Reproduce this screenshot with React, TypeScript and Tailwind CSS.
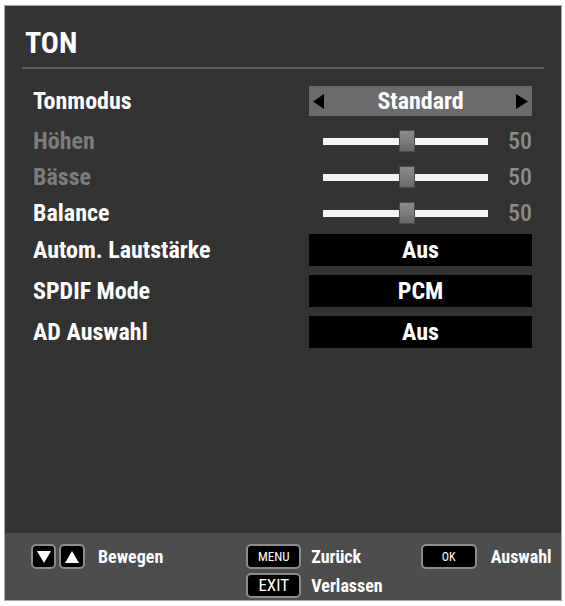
import React from 'react'

function Slider({ value }: { value: number }) {
  return (
    <div className="flex items-center w-[223px]">
      <div className="relative ml-[14px] w-[165px] h-[7px] bg-[#f4f4f4]">
        <div className="absolute left-[76px] top-[-8px] w-[16px] h-[22px] bg-gradient-to-b from-[#8c8c8c] to-[#6a6a6a] border border-[#4a4a4a]" />
      </div>
      <span className="ml-auto text-[24px] font-medium text-[#8a8a8a] leading-none">{value}</span>
    </div>
  )
}

function Row({ label, dim, className, children }: { label: string; dim?: boolean; className?: string; children: React.ReactNode }) {
  return (
    <div className={`flex items-center ${className ?? ''}`}>
      <span className={`w-[304px] shrink-0 pl-[28px] text-[24px] font-bold leading-none ${dim ? 'text-[#7c7c7c]' : 'text-white'}`}>{label}</span>
      {children}
    </div>
  )
}

function ValueBox({ text }: { text: string }) {
  return (
    <div className="w-[223px] h-full bg-black flex items-center justify-center text-[24px] font-bold text-white leading-none">
      {text}
    </div>
  )
}

function Key({ children, className }: { children: React.ReactNode; className?: string }) {
  return (
    <div className={`bg-black border-2 border-[#8c8c8c] rounded-[5px] flex items-center justify-center text-white ${className ?? ''}`}>
      {children}
    </div>
  )
}

export default function App() {
  return (
    <div className="w-[565px] h-[606px] bg-white pt-[5px] pl-[4px] font-['Roboto_Condensed',sans-serif]">
      <div className="w-[558px] h-[596px] bg-[#333333] border border-[#a8a8a8] flex flex-col">
        {/* Kopf */}
        <div className="pl-[20px] pt-[22px] h-[61px]">
          <h1 className="text-[30px] font-bold text-white leading-none">TON</h1>
        </div>
        <div className="mx-[17px] h-[2px] bg-[#5e5e5e]" />

        {/* Einstellungen */}
        <Row label="Tonmodus" className="mt-[17px] h-[30px]">
          <div className="w-[223px] h-full bg-[#6b6b6b] flex items-center px-[4px]">
            <svg width="12" height="15" viewBox="0 0 12 15"><polygon points="11,0 11,15 0,7.5" fill="#000" /></svg>
            <span className="flex-1 text-center text-[24px] font-bold text-white leading-none">Standard</span>
            <svg width="12" height="15" viewBox="0 0 12 15"><polygon points="0,0 0,15 12,7.5" fill="#000" /></svg>
          </div>
        </Row>
        <Row label="Höhen" dim className="mt-[7px] h-[36px]">
          <Slider value={50} />
        </Row>
        <Row label="Bässe" dim className="h-[36px]">
          <Slider value={50} />
        </Row>
        <Row label="Balance" className="h-[36px]">
          <Slider value={50} />
        </Row>
        <Row label="Autom. Lautstärke" className="mt-[3px] h-[32px]">
          <ValueBox text="Aus" />
        </Row>
        <Row label="SPDIF Mode" className="mt-[9px] h-[32px]">
          <ValueBox text="PCM" />
        </Row>
        <Row label="AD Auswahl" className="mt-[9px] h-[32px]">
          <ValueBox text="Aus" />
        </Row>

        {/* Fußleiste */}
        <div className="mt-auto h-[67px] bg-[#4d4d4d] flex items-start pt-[11px] text-white font-bold text-[18px] leading-none">
          <div className="flex items-center ml-[26px] gap-[3px]">
            <Key className="w-[25px] h-[25px]">
              <svg width="14" height="12" viewBox="0 0 14 12"><polygon points="0,0 14,0 7,12" fill="#fff" /></svg>
            </Key>
            <Key className="w-[26px] h-[25px]">
              <svg width="14" height="12" viewBox="0 0 14 12"><polygon points="0,12 14,12 7,0" fill="#fff" /></svg>
            </Key>
            <span className="ml-[10px]">Bewegen</span>
          </div>
          <div className="ml-[83px] flex flex-col gap-[4px]">
            <div className="flex items-center">
              <Key className="w-[55px] h-[25px] text-[13px] font-normal">MENU</Key>
              <span className="ml-[10px]">Zurück</span>
            </div>
            <div className="flex items-center">
              <Key className="w-[55px] h-[25px] text-[17px] font-normal">EXIT</Key>
              <span className="ml-[10px]">Verlassen</span>
            </div>
          </div>
          <div className="ml-[38px] flex items-center">
            <Key className="w-[56px] h-[25px] text-[12px] font-normal text-[#cfcfcf]">OK</Key>
            <span className="ml-[14px]">Auswahl</span>
          </div>
        </div>
      </div>
    </div>
  )
}
